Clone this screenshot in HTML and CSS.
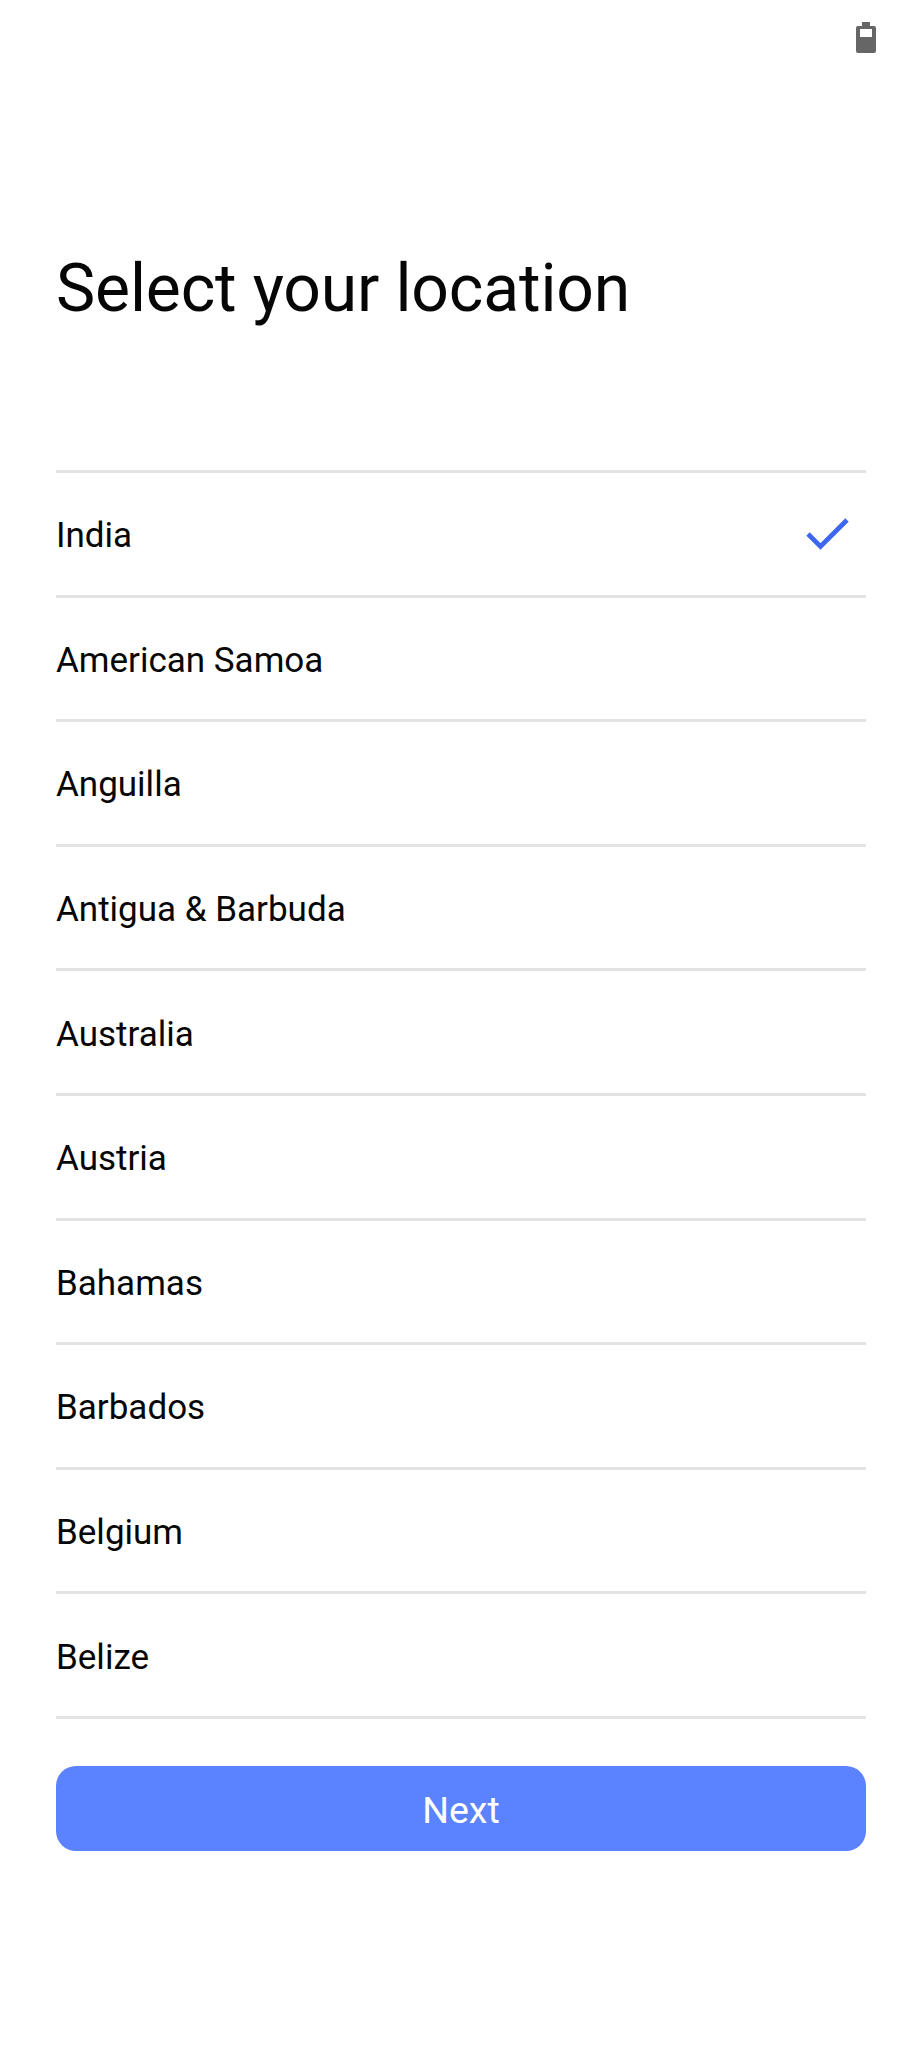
FILE: index.html
```html
<!DOCTYPE html>
<html lang="en">
<head>
<meta charset="utf-8">
<title>Select your location</title>
<link rel="stylesheet" href="styles.css">
</head>
<body>
<div class="page">
  <header class="status">
    <svg class="battery" width="20" height="31" viewBox="0 0 20 31" aria-hidden="true">
      <path fill="#666" fill-rule="evenodd" d="M6 0h8v4h4a2 2 0 0 1 2 2v23a2 2 0 0 1-2 2H2a2 2 0 0 1-2-2V6a2 2 0 0 1 2-2h4zM4 7v8h12V7z"/>
    </svg>
  </header>
  <h1 class="title">Select your location</h1>
  <ul class="list">
    <li class="row">India
      <svg class="check" width="44" height="34" viewBox="0 0 44 34" aria-hidden="true">
        <path d="M2 17l12.500 12.500L41 3" fill="none" stroke="#3f66f0" stroke-width="4.600"/>
      </svg>
    </li>
    <li class="row">American Samoa</li>
    <li class="row">Anguilla</li>
    <li class="row">Antigua &amp; Barbuda</li>
    <li class="row">Australia</li>
    <li class="row">Austria</li>
    <li class="row">Bahamas</li>
    <li class="row">Barbados</li>
    <li class="row">Belgium</li>
    <li class="row">Belize</li>
  </ul>
  <button class="next" type="button">Next</button>
</div>
</body>
</html>
```
FILE: styles.css
```css
html, body {
  margin: 0;
  padding: 0;
  background: #fff;
}
.page {
  width: 922px;
  height: 2048px;
  box-sizing: border-box;
  padding: 0 56px;
  font-family: Roboto, "Liberation Sans", sans-serif;
  color: #060606;
  overflow: hidden;
}
.status {
  height: 70px;
  padding: 22px 0 0;
  box-sizing: border-box;
  display: flex;
  justify-content: flex-end;
}
.battery {
  display: block;
  margin-right: -10px;
}
.title {
  margin: 179px 0 0;
  height: 221px;
  font-size: 66px;
  line-height: 80px;
  font-weight: 400;
  letter-spacing: -0.15px;
}
.list {
  margin: 0;
  padding: 0;
  list-style: none;
  border-bottom: 3px solid #e3e3e3;
}
.row {
  height: 124.600px;
  box-sizing: border-box;
  border-top: 3px solid #e3e3e3;
  display: flex;
  align-items: center;
  justify-content: space-between;
  font-size: 35px;
  padding: 4px 16px 0 0;
}
.check {
  margin-top: -4px;
}
.next {
  display: block;
  width: 810px;
  height: 85px;
  margin: 47px 0 0;
  padding: 4px 0 0;
  border: 0;
  border-radius: 20px;
  background: #5b82ff;
  color: #fff;
  font-family: inherit;
  font-size: 37.500px;
}
```
